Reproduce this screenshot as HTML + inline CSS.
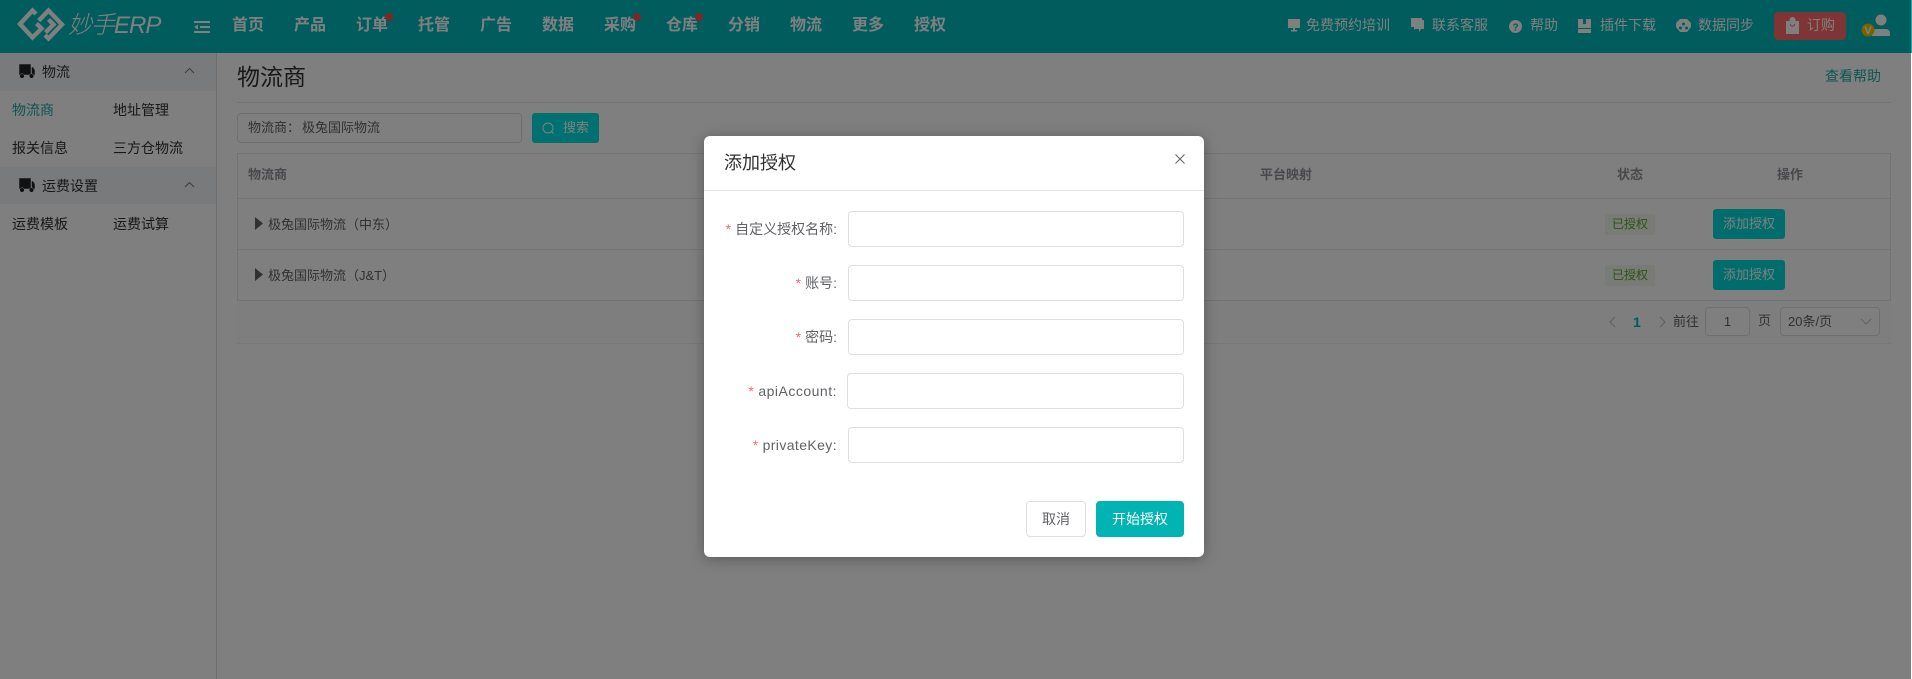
<!DOCTYPE html>
<html lang="zh"><head><meta charset="utf-8"><title>物流商</title>
<style>
*{box-sizing:border-box;margin:0;padding:0}
html,body{width:1912px;height:679px;overflow:hidden;background:#fff;font-family:"Liberation Sans","Noto Sans CJK SC",sans-serif;font-size:14px;color:#303133}
.a{position:absolute;white-space:nowrap;line-height:20px}
#head{position:absolute;left:0;top:0;width:1912px;height:53px;background:#00b8ba}
#head .n{position:absolute;top:15px;font-size:16px;line-height:22px;color:#fff;font-weight:700;white-space:nowrap}
#head .r{position:absolute;top:15px;font-size:14px;line-height:20px;color:#fff;white-space:nowrap}
.dot{position:absolute;top:13px;width:8px;height:8px;border-radius:50%;background:#ff4d4f}
#side{position:absolute;left:0;top:53px;width:217px;height:626px;border-right:1px solid #ddd;background:#fff}
.g{position:absolute;left:0;width:216px;background:#f3f5f9}
.btn{position:absolute;left:1713px;width:72px;height:30px;background:#00d8d8;border-radius:3px;color:#fff;font-size:13px;line-height:30px;text-align:center}
.tag{position:absolute;left:1605px;width:50px;height:21px;background:#f0f7ec;color:#5aa82e;font-size:12px;line-height:21px;text-align:center}
.line{position:absolute;background:#e4e7ed}
.b{position:absolute;border:1px solid #dcdfe6;border-radius:4px;background:#fff}
#ov{position:absolute;left:0;top:0;width:1911px;height:679px;background:rgba(0,0,0,.5)}
#modal{position:absolute;left:704px;top:136px;width:500px;height:421px;background:#fff;border-radius:6px;box-shadow:0 2px 14px rgba(0,0,0,.3)}
.lb{position:absolute;right:367px;font-size:14px;line-height:20px;color:#606266;white-space:nowrap}
.lb i{font-style:normal;color:#f56c6c;margin-right:4px}
.in{position:absolute;left:144px;width:336px;height:36px;border:1px solid #dcdfe6;border-radius:4px;background:#fff}
</style></head><body>
<div id="head">
<svg style="position:absolute;left:0;top:0" width="80" height="53" fill="none" stroke="#fff" stroke-width="4.4"><path d="M36 14 32.500 10.500 20 24 32.500 37.500 41.500 28.500 36.500 23.500"/><path d="M38.700 20.700 48.500 10.500 62 24.500 48.500 38.500 45 35"/><path d="M48.500 19.500 53.500 24.500 45.500 32.500"/></svg>
<div style="position:absolute;left:68px;top:10px;font-size:24px;line-height:32px;font-style:italic;color:#fff;font-weight:300;letter-spacing:-1px">妙手ERP</div>
<svg style="position:absolute;left:194px;top:20px" width="16" height="14" fill="#fff"><rect y="1" width="16" height="2"/><rect x="6" y="6" width="10" height="2"/><rect y="11" width="16" height="2"/><path d="M0 7l4-2.500v5z"/></svg>
<div class="n" style="left:232px">首页</div><div class="n" style="left:294px">产品</div><div class="n" style="left:356px">订单</div><div class="n" style="left:418px">托管</div><div class="n" style="left:480px">广告</div><div class="n" style="left:542px">数据</div><div class="n" style="left:604px">采购</div><div class="n" style="left:666px">仓库</div><div class="n" style="left:728px">分销</div><div class="n" style="left:790px">物流</div><div class="n" style="left:852px">更多</div><div class="n" style="left:914px">授权</div>
<div class="dot" style="left:385px"></div><div class="dot" style="left:633px"></div><div class="dot" style="left:695px"></div>
<svg style="position:absolute;left:1287px;top:18px" width="14" height="16" fill="#fff"><path d="M1 1h12v9H8v2h2v1.500H4V12h2v-2H1z"/></svg>
<div class="r" style="left:1306px">免费预约培训</div>
<svg style="position:absolute;left:1410px;top:17px" width="15" height="16" fill="#fff"><path d="M1 1h11v2h2v9h-3l-2 3v-3H5l-1 1V10H1z"/></svg>
<div class="r" style="left:1432px">联系客服</div>
<svg style="position:absolute;left:1509px;top:20px" width="13" height="13"><circle cx="6.500" cy="6.500" r="6.500" fill="#fff"/><text x="6.500" y="10.500" font-size="10" font-weight="700" text-anchor="middle" fill="#00b8ba" font-family="Liberation Sans">?</text></svg>
<div class="r" style="left:1530px">帮助</div>
<svg style="position:absolute;left:1578px;top:19px" width="13" height="14" fill="#fff"><path d="M0 0h13v14H0z"/><rect y="9" width="13" height="1" fill="#00b8ba"/><rect x="5" width="3" height="5" fill="#00b8ba"/></svg>
<div class="r" style="left:1600px">插件下载</div>
<svg style="position:absolute;left:1676px;top:18px" width="15" height="15" fill="#fff"><path d="M4 1h7l4 4v4l-4 5H4L0 9V5z"/><circle cx="7.500" cy="6" r="1.500" fill="#00b8ba"/><circle cx="4.500" cy="10" r="1.500" fill="#00b8ba"/><circle cx="10.500" cy="10" r="1.500" fill="#00b8ba"/></svg>
<div class="r" style="left:1698px">数据同步</div>
<div style="position:absolute;left:1774px;top:12px;width:72px;height:28px;background:#ff6b6b;border-radius:4px"></div>
<svg style="position:absolute;left:1786px;top:17px" width="13" height="17" fill="#fff"><path d="M0 4h3.500V3a3 3 0 0 1 6 0v1H13v13H0z"/><path d="M4.500 4V3a2 2 0 0 1 4 0v1" stroke="#fff" fill="none"/><path d="M4.500 7c0 3 4 3 4 0" stroke="#ff6b6b" fill="none"/></svg>
<div class="r" style="left:1807px">订购</div>
<svg style="position:absolute;left:1860px;top:12px" width="32" height="28"><circle cx="21" cy="8" r="5.500" fill="#fff"/><path d="M12 24v-3a4 4 0 0 1 4-4h10a4 4 0 0 1 4 4v3z" fill="#fff"/><circle cx="8" cy="18" r="6.500" fill="#f2c200"/><text x="8" y="22" font-size="11" font-weight="700" text-anchor="middle" fill="#fff" font-family="Liberation Sans">V</text></svg>
</div>
<div id="side">
<div class="g" style="top:0;height:38px"></div>
<div class="g" style="top:114px;height:37px"></div>
<svg style="position:absolute;left:19px;top:11px" width="16" height="15" fill="#222" stroke="#f3f5f9" stroke-width=".5"><path d="M0 0h12v11H0zM12.500 3H14l2 3v5h-3.500z"/><circle cx="3" cy="12" r="2.300"/><circle cx="12.500" cy="12" r="2.300"/></svg>
<svg style="position:absolute;left:19px;top:125px" width="16" height="15" fill="#222" stroke="#f3f5f9" stroke-width=".5"><path d="M0 0h12v11H0zM12.500 3H14l2 3v5h-3.500z"/><circle cx="3" cy="12" r="2.300"/><circle cx="12.500" cy="12" r="2.300"/></svg>
<div class="a" style="left:42px;top:9px">物流</div><div class="a" style="left:42px;top:123px">运费设置</div>
<svg style="position:absolute;left:184px;top:14px" width="11" height="8" fill="none" stroke="#777"><path d="M1 6l4.500-4.500L10 6"/></svg>
<svg style="position:absolute;left:184px;top:128px" width="11" height="8" fill="none" stroke="#777"><path d="M1 6l4.500-4.500L10 6"/></svg>
<div class="a" style="left:12px;top:47px;color:#20a8a8">物流商</div><div class="a" style="left:113px;top:47px">地址管理</div>
<div class="a" style="left:12px;top:85px">报关信息</div><div class="a" style="left:113px;top:85px">三方仓物流</div>
<div class="a" style="left:12px;top:161px">运费模板</div><div class="a" style="left:113px;top:161px">运费试算</div>
</div>
<div class="a" style="left:237px;top:62px;font-size:23px;line-height:30px">物流商</div>
<div class="a" style="left:1825px;top:66px;color:#20a8a8">查看帮助</div>
<div class="line" style="left:237px;top:102px;width:1654px;height:1px"></div>
<div class="b" style="left:237px;top:113px;width:285px;height:30px"></div>
<div class="a" style="left:248px;top:118px;font-size:13px;color:#606266">物流商：</div><div class="a" style="left:302px;top:118px;font-size:13px;color:#606266">极兔国际物流</div>
<div style="position:absolute;left:532px;top:113px;width:67px;height:30px;border-radius:3px;background:#00e0e0"></div>
<svg style="position:absolute;left:542px;top:122px" width="13" height="13" fill="none" stroke="#fff"><circle cx="6" cy="6" r="5"/><path d="M9.500 9.500l2 2"/></svg>
<div class="a" style="left:563px;top:118px;font-size:13px;color:#fff">搜索</div>
<div class="line" style="left:237px;top:153px;width:1654px;height:1px"></div>
<div class="line" style="left:237px;top:153px;width:1px;height:148px"></div>
<div class="line" style="left:1890px;top:153px;width:1px;height:148px"></div>
<div class="line" style="left:237px;top:198px;width:1654px;height:1px"></div>
<div class="line" style="left:237px;top:249px;width:1654px;height:1px"></div>
<div class="line" style="left:237px;top:300px;width:1654px;height:1px"></div>
<div style="position:absolute;left:237px;top:301px;width:1654px;height:43px;background:#fcfcfc;border-bottom:1px solid #eee"></div>
<div class="a" style="left:248px;top:165px;font-size:13px;color:#909399;font-weight:700">物流商</div>
<div class="a" style="left:1260px;top:165px;font-size:13px;color:#909399;font-weight:700">平台映射</div>
<div class="a" style="left:1617px;top:165px;font-size:13px;color:#909399;font-weight:700">状态</div>
<div class="a" style="left:1777px;top:165px;font-size:13px;color:#909399;font-weight:700">操作</div>
<svg style="position:absolute;left:255px;top:217px" width="8" height="13" fill="#606266"><path d="M0 0l8 6.500-8 6.500z"/></svg>
<svg style="position:absolute;left:255px;top:268px" width="8" height="13" fill="#606266"><path d="M0 0l8 6.500-8 6.500z"/></svg>
<div class="a" style="left:268px;top:215px;font-size:13px;color:#606266">极兔国际物流（中东）</div>
<div class="a" style="left:268px;top:266px;font-size:13px;color:#606266">极兔国际物流（J&amp;T）</div>
<div class="tag" style="top:214px">已授权</div><div class="tag" style="top:265px">已授权</div>
<div class="btn" style="top:209px">添加授权</div><div class="btn" style="top:260px">添加授权</div>
<svg style="position:absolute;left:1609px;top:316px" width="8" height="12" fill="none" stroke="#bbb"><path d="M6 1 1 6l5 5"/></svg>
<div class="a" style="left:1633px;top:312px;font-weight:700;color:#00b8b8">1</div>
<svg style="position:absolute;left:1658px;top:316px" width="8" height="12" fill="none" stroke="#bbb"><path d="M2 1l5 5-5 5"/></svg>
<div class="a" style="left:1673px;top:312px;font-size:13px;color:#606266">前往</div>
<div class="b" style="left:1705px;top:307px;width:45px;height:29px;text-align:center;font-size:13px;line-height:27px;color:#606266">1</div>
<div class="a" style="left:1758px;top:311px;font-size:13px;color:#606266">页</div>
<div class="b" style="left:1780px;top:307px;width:100px;height:29px"></div>
<div class="a" style="left:1788px;top:312px;font-size:13px;color:#606266">20条/页</div>
<svg style="position:absolute;left:1860px;top:318px" width="12" height="8" fill="none" stroke="#c0c4cc"><path d="M1 1l5 5 5-5"/></svg>
<div id="ov"></div>
<div id="modal">
<div class="a" style="left:20px;top:12px;font-size:18px;line-height:30px;color:#303133">添加授权</div>
<svg style="position:absolute;left:471px;top:18px" width="10" height="10" fill="none" stroke="#606266"><path d="M.5.500l9 9m0-9l-9 9"/></svg>
<div style="position:absolute;left:0;top:54px;width:500px;height:1px;background:#e4e7ed"></div>
<div class="lb" style="top:83px"><i>*</i>自定义授权名称:</div><div class="in" style="top:75px"></div>
<div class="lb" style="top:137px"><i>*</i>账号:</div><div class="in" style="top:129px"></div>
<div class="lb" style="top:191px"><i>*</i>密码:</div><div class="in" style="top:183px"></div>
<div class="lb" style="top:245px;letter-spacing:.5px"><i>*</i>apiAccount:</div><div class="in" style="top:237px;left:143px;width:337px"></div>
<div class="lb" style="top:299px;letter-spacing:.4px"><i>*</i>privateKey:</div><div class="in" style="top:291px"></div>
<div style="position:absolute;left:322px;top:365px;width:60px;height:36px;border:1px solid #dcdfe6;border-radius:4px;text-align:center;line-height:34px;color:#606266">取消</div>
<div style="position:absolute;left:392px;top:365px;width:88px;height:36px;background:#00b4b4;border-radius:4px;text-align:center;line-height:36px;color:#fff">开始授权</div>
</div>
</body></html>
